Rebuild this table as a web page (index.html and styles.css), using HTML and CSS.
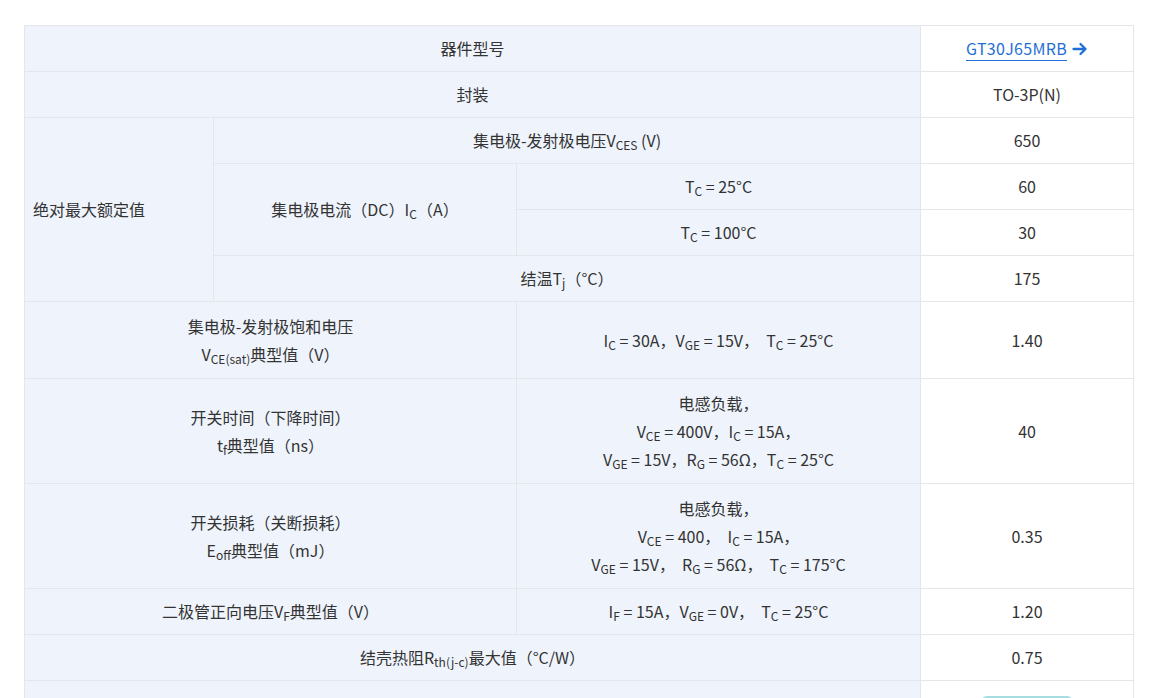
FILE: index.html
```html
<!DOCTYPE html>
<html lang="zh-CN">
<head>
<meta charset="utf-8">
<title>GT30J65MRB</title>
<link rel="stylesheet" href="styles.css">
</head>
<body>
<div class="page">
  <table class="spec">
    <colgroup>
      <col class="c1"><col class="c2"><col class="c3"><col class="c4">
    </colgroup>
    <tbody>
      <tr>
        <th colspan="3">器件型号</th>
        <td><a class="part" href="#">GT30J65MRB</a><svg class="arrow" width="16" height="14" viewBox="0 0 16 14"><path d="M1.5 7H13.5M8.5 2L13.5 7L8.5 12" fill="none" stroke="#1f6fd6" stroke-width="2.3" stroke-linecap="round" stroke-linejoin="round"/></svg></td>
      </tr>
      <tr>
        <th colspan="3">封装</th>
        <td>TO-3P(N)</td>
      </tr>
      <tr>
        <th rowspan="4" class="left">绝对最大额定值</th>
        <th colspan="2">集电极-发射极电压V<sub>CES</sub> (V)</th>
        <td>650</td>
      </tr>
      <tr>
        <th rowspan="2">集电极电流（DC）I<sub>C</sub>（A）</th>
        <th>T<sub>C</sub> = 25°C</th>
        <td>60</td>
      </tr>
      <tr>
        <th>T<sub>C</sub> = 100°C</th>
        <td>30</td>
      </tr>
      <tr>
        <th colspan="2">结温T<sub>j</sub>（°C）</th>
        <td>175</td>
      </tr>
      <tr>
        <th colspan="2"><div class="ml">集电极-发射极饱和电压<br>V<sub>CE(sat)</sub>典型值（V）</div></th>
        <th>I<sub>C</sub> = 30A，V<sub>GE</sub> = 15V，&nbsp; T<sub>C</sub> = 25°C</th>
        <td>1.40</td>
      </tr>
      <tr>
        <th colspan="2"><div class="ml">开关时间（下降时间）<br>t<sub>f</sub>典型值（ns）</div></th>
        <th><div class="ml">电感负载，<br>V<sub>CE</sub> = 400V，I<sub>C</sub> = 15A，<br>V<sub>GE</sub> = 15V，R<sub>G</sub> = 56Ω，T<sub>C</sub> = 25°C</div></th>
        <td>40</td>
      </tr>
      <tr>
        <th colspan="2"><div class="ml">开关损耗（关断损耗）<br>E<sub>off</sub>典型值（mJ）</div></th>
        <th><div class="ml">电感负载，<br>V<sub>CE</sub> = 400，&nbsp; I<sub>C</sub> = 15A，<br>V<sub>GE</sub> = 15V，&nbsp; R<sub>G</sub> = 56Ω，&nbsp; T<sub>C</sub> = 175°C</div></th>
        <td>0.35</td>
      </tr>
      <tr>
        <th colspan="2">二极管正向电压V<sub>F</sub>典型值（V）</th>
        <th>I<sub>F</sub> = 15A，V<sub>GE</sub> = 0V，&nbsp; T<sub>C</sub> = 25°C</th>
        <td>1.20</td>
      </tr>
      <tr>
        <th colspan="3">结壳热阻R<sub>th(j-c)</sub>最大值（°C/W）</th>
        <td>0.75</td>
      </tr>
      <tr>
        <th colspan="3" class="last"></th>
        <td class="last"><span class="btn" aria-hidden="true"></span></td>
      </tr>
    </tbody>
  </table>
</div>
</body>
</html>
```

FILE: styles.css
```css
html, body {
  margin: 0;
  padding: 0;
  background: #ffffff;
}
body {
  font-family: "Noto Sans CJK SC", "Microsoft YaHei", sans-serif;
  font-size: 16px;
  color: #333333;
  overflow: hidden;
}
.page {
  padding: 25px 0 0 24px;
}
.spec {
  border-collapse: collapse;
  table-layout: fixed;
  width: 1110px;
}
.c1 { width: 189px; }
.c2 { width: 303px; }
.c3 { width: 404px; }
.c4 { width: 213px; }
.spec th,
.spec td {
  border: 1px solid #e4e6e9;
  padding: 10px 8px;
  line-height: 25px;
  text-align: center;
  font-weight: 400;
  vertical-align: middle;
  white-space: nowrap;
}
.spec th {
  background: #eff4fc;
}
.spec td {
  background: #ffffff;
}
.spec th.left {
  text-align: left;
}
.ml {
  line-height: 28px;
}
sub {
  font-size: 12px;
  line-height: 0;
  vertical-align: -3px;
}
.part {
  color: #1f6fd6;
  text-decoration: underline;
  text-underline-offset: 5px;
  text-decoration-thickness: 1px;
  letter-spacing: 0.3px;
}
.arrow {
  margin-left: 5px;
  vertical-align: -1px;
}
.spec .last {
  padding-top: 15px;
  padding-bottom: 0;
  height: 30px;
  vertical-align: top;
}
.btn {
  display: inline-block;
  width: 92px;
  height: 34px;
  border: 2px solid #a6dde1;
  border-radius: 6px;
  background: #ffffff;
  box-sizing: border-box;
}
```
